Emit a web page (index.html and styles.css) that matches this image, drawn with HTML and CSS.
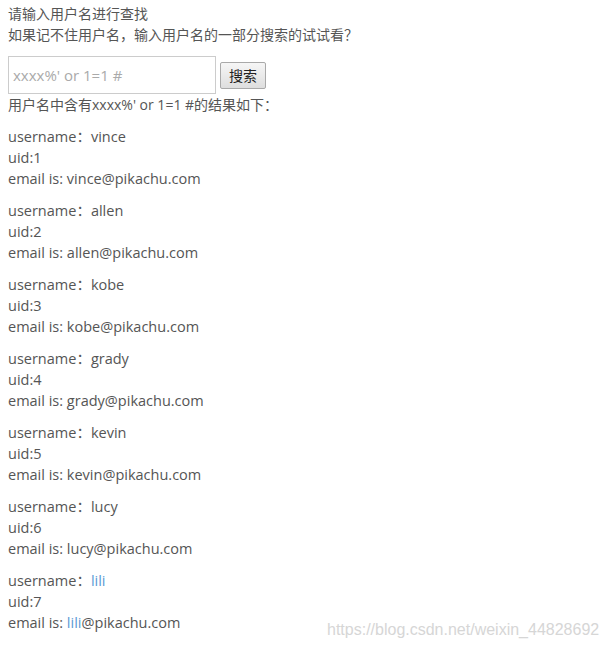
FILE: index.html
```html
<!DOCTYPE html>
<html>
<head>
<meta charset="utf-8">
<link rel="stylesheet" href="styles.css">
</head>
<body>
<div class="page">
  <p class="intro">请输入用户名进行查找<br>如果记不住用户名，输入用户名的一部分搜索的试试看？</p>
  <form class="search">
    <input class="field" type="text" placeholder="xxxx%' or 1=1 #">
    <button class="btn" type="button">搜索</button>
  </form>
  <p class="intro">用户名中含有xxxx%' or 1=1 #的结果如下：</p>
  <p class="rec">username：vince<br>uid:1<br>email is: vince@pikachu.com</p>
  <p class="rec">username：allen<br>uid:2<br>email is: allen@pikachu.com</p>
  <p class="rec">username：kobe<br>uid:3<br>email is: kobe@pikachu.com</p>
  <p class="rec">username：grady<br>uid:4<br>email is: grady@pikachu.com</p>
  <p class="rec">username：kevin<br>uid:5<br>email is: kevin@pikachu.com</p>
  <p class="rec">username：lucy<br>uid:6<br>email is: lucy@pikachu.com</p>
  <p class="rec">username：<span class="hl">lili</span><br>uid:7<br>email is: <span class="hl">lili</span>@pikachu.com</p>
</div>
<div class="mark">https://blog.csdn.net/weixin_44828692</div>
</body>
</html>
```
FILE: styles.css
```css
html, body {
  margin: 0;
  padding: 0;
  background: #fff;
}
body {
  font-family: "Open Sans", "Noto Sans CJK SC", sans-serif;
  font-size: 14px;
  color: #555;
}
.page {
  padding: 3px 8px 0 8px;
}
.intro {
  margin: 0;
  line-height: 21px;
}
.search {
  display: flex;
  align-items: center;
  gap: 4px;
  margin: 11px 0 0 0;
}
.field {
  box-sizing: border-box;
  width: 208px;
  height: 38px;
  border: 1px solid #ccc;
  padding: 0 4px;
  margin: 0;
  font-family: "Open Sans", sans-serif;
  font-size: 15px;
  color: #555;
  outline: none;
}
.field::placeholder {
  color: #aaa;
}
.btn {
  box-sizing: border-box;
  width: 46px;
  height: 27px;
  margin: 0;
  padding: 0;
  border: 1px solid #a9a9a9;
  border-radius: 2px;
  background: linear-gradient(#f6f6f6, #dedede);
  font-family: "Noto Sans CJK SC", sans-serif;
  font-size: 14px;
  color: #222;
}
.rec {
  margin: 11px 0 0 0;
  line-height: 21px;
  font-size: 14.5px;
}
.hl {
  color: #5b9bd5;
}
.mark {
  position: absolute;
  left: 327px;
  top: 621px;
  font-family: "Liberation Sans", sans-serif;
  font-size: 16px;
  color: #d6d6d6;
  white-space: nowrap;
}
```
